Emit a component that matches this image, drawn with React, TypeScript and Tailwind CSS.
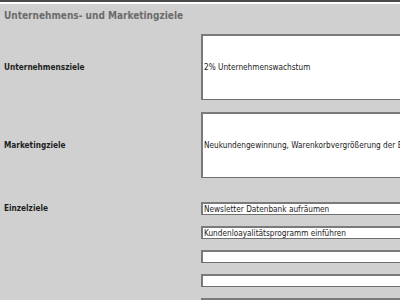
import React from "react";

const font = { fontFamily: '"DejaVu Sans", Verdana, sans-serif' };

function Field({ text, h }: { text?: string; h: string }) {
  return (
    <div
      className={`w-[260px] ${h} shrink-0 bg-white border border-[#6f6f6f] border-t-2 border-l-2 border-t-[#7a7a7a] border-l-[#7a7a7a] flex items-center pl-[1px] text-[8.2px] text-[#1a1a1a] whitespace-nowrap overflow-hidden font-stretch-condensed`}
    >
      {text}
    </div>
  );
}

export default function App() {
  return (
    <div className="w-[400px] h-[300px] overflow-hidden bg-[#d0d0d0] flex flex-col font-stretch-condensed" style={font}>
      <div className="h-[2px] bg-[#4a4a4a] shrink-0" />
      <div className="h-[2px] bg-white shrink-0" />
      <div className="h-[30px] shrink-0 pl-[4px] pt-[5px] text-[10px] font-bold text-[#6b6b6b] leading-[14px]">
        Unternehmens- und Marketingziele
      </div>
      <div className="flex items-center">
        <div className="w-[201px] shrink-0 pl-[4px] text-[8.2px] font-bold text-[#1e1e1e]">Unternehmensziele</div>
        <Field h="h-[66px]" text="2% Unternehmenswachstum" />
      </div>
      <div className="flex items-center mt-[12px]">
        <div className="w-[201px] shrink-0 pl-[4px] text-[8.2px] font-bold text-[#1e1e1e]">Marketingziele</div>
        <Field h="h-[66px]" text="Neukundengewinnung, Warenkorbvergrößerung der Bestandskunden" />
      </div>
      <div className="flex items-start mt-[24px]">
        <div className="w-[201px] shrink-0 pl-[4px] h-[13px] flex items-center text-[8.2px] font-bold text-[#1e1e1e]">Einzelziele</div>
        <div className="flex flex-col gap-[11px]">
          <Field h="h-[13px]" text="Newsletter Datenbank aufräumen" />
          <Field h="h-[13px]" text="Kundenloayalitätsprogramm einführen" />
          <Field h="h-[13px]" />
          <Field h="h-[13px]" />
          <Field h="h-[13px]" />
        </div>
      </div>
    </div>
  );
}
